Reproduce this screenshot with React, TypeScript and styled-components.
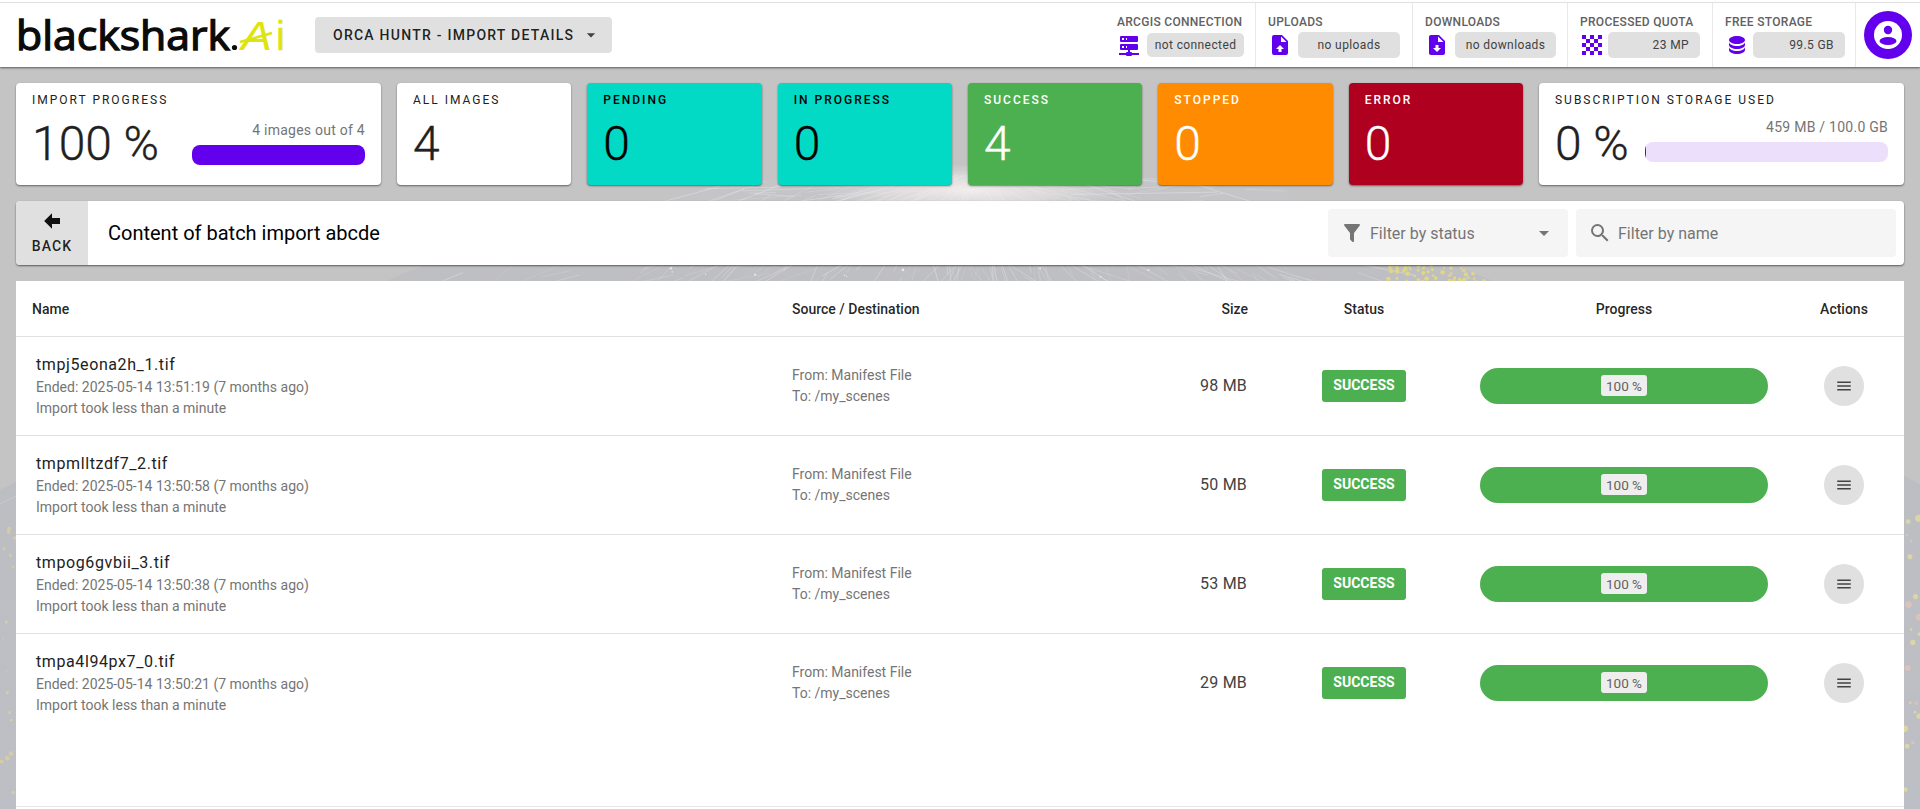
import React from "react";
import styled, { createGlobalStyle } from "styled-components";

const PURPLE = "#6200ee";
const GREEN = "#4caf50";

const Global = createGlobalStyle`
  html, body { margin: 0; padding: 0; height: 100%; overflow: hidden; }
  body { font-family: Roboto, "Liberation Sans", sans-serif; color: #212121; background: #c4c4c4; }
  * { box-sizing: border-box; }
`;

const Page = styled.div`
  position: relative;
  height: 100vh;
  display: flex;
  flex-direction: column;
  overflow: hidden;
  background: #c4c4c4;
`;
const Backdrop = styled.svg`
  position: absolute;
  inset: 0;
  width: 100%;
  height: 100%;
`;
const Header = styled.header`
  position: relative;
  order: 1;
  flex: none;
  height: 67px;
  padding-top: 2px;
  background: #fff;
  box-shadow: 0 1px 2px rgba(0, 0, 0, 0.55);
`;
const HeaderInner = styled.div`
  height: 65px;
  border-top: 1px solid #e0e0e0;
  display: flex;
  align-items: stretch;
`;
const LogoBox = styled.svg`
  flex: none;
  width: 270px;
  height: 48px;
  margin: 8px 0 0 16px;
  overflow: visible;
`;
const MenuButton = styled.div`
  flex: none;
  width: 297px;
  height: 36px;
  margin: 14px 0 0 29px;
  padding: 0 11px 0 18px;
  display: flex;
  align-items: center;
  justify-content: space-between;
  background: #e0e0e0;
  border-radius: 4px;
  font-size: 14px;
  font-weight: 500;
  letter-spacing: 1.25px;
  color: rgba(0, 0, 0, 0.87);
`;
const Stats = styled.div`
  margin-left: auto;
  display: flex;
`;
const Section = styled.div<{ $w: number; $first?: boolean }>`
  width: ${(p) => p.$w}px;
  padding: 12px 0 0 12px;
  border-left: ${(p) => (p.$first ? "none" : "1px solid #e8e8e8")};
`;
const SectionLabel = styled.div`
  font-size: 12px;
  line-height: 14px;
  font-weight: 500;
  letter-spacing: 0.3px;
  color: #616161;
  white-space: nowrap;
`;
const SectionRow = styled.div<{ $gap: number }>`
  display: flex;
  align-items: center;
  gap: ${(p) => p.$gap}px;
  height: 26px;
  margin-top: 3px;
`;
const Pill = styled.div<{ $w: number; $h: number; $right?: boolean }>`
  width: ${(p) => p.$w}px;
  height: ${(p) => p.$h}px;
  padding: 0 11px;
  display: flex;
  align-items: center;
  justify-content: ${(p) => (p.$right ? "flex-end" : "center")};
  background: #e0e0e0;
  border-radius: 5px;
  font-size: 12px;
  letter-spacing: 0.4px;
  color: #424242;
  white-space: nowrap;
`;
const AvatarCell = styled.div`
  width: 65px;
  border-left: 1px solid #e8e8e8;
  padding: 8px 0 0 8px;
`;
const Avatar = styled.div`
  width: 48px;
  height: 48px;
  border-radius: 50%;
  background: ${PURPLE};
  display: flex;
  align-items: center;
  justify-content: center;
`;
const Main = styled.main`
  position: relative;
  order: 2;
  flex: 1;
  min-height: 0;
  padding: 16px 16px 0;
  display: flex;
  flex-direction: column;
  gap: 16px;
`;
const CardGrid = styled.div`
  flex: none;
  display: grid;
  grid-template-columns: 365px repeat(6, 1fr) 365px;
  gap: 16px;
  height: 102px;
`;
const Card = styled.div<{ $bg?: string; $fg?: string }>`
  padding: 10px 16px 0;
  border-radius: 4px;
  background: ${(p) => p.$bg ?? "#fff"};
  color: ${(p) => p.$fg ?? "#212121"};
  box-shadow: 0 1px 2px rgba(0, 0, 0, 0.5);
`;
const CardLabel = styled.div<{ $strong?: boolean }>`
  font-size: 12px;
  line-height: 14px;
  letter-spacing: 2px;
  font-weight: ${(p) => (p.$strong ? 500 : 400)};
  white-space: nowrap;
`;
const BigValue = styled.div`
  font-size: 48px;
  line-height: 56px;
  font-weight: 300;
  -webkit-text-stroke: 0.35px currentColor;
  margin-top: 9px;
  white-space: nowrap;
`;
const ValueRow = styled.div`
  display: flex;
  justify-content: space-between;
  align-items: flex-start;
`;
const MeterColumn = styled.div<{ $w: number; $lift: number }>`
  width: ${(p) => p.$w}px;
  margin-top: ${(p) => 13 - p.$lift}px;
`;
const MeterCaption = styled.div`
  font-size: 14px;
  line-height: 20px;
  letter-spacing: 0.25px;
  color: #757575;
  text-align: right;
  white-space: nowrap;
`;
const MeterTrack = styled.div`
  height: 20px;
  margin-top: 5px;
  border-radius: 8px;
  overflow: hidden;
  background: #ecdffc;
`;
const MeterFill = styled.div`
  height: 100%;
  background: ${PURPLE};
`;
const Toolbar = styled.div`
  flex: none;
  height: 64px;
  display: flex;
  align-items: center;
  background: #fff;
  border-radius: 4px;
  overflow: hidden;
  box-shadow: 0 1px 2px rgba(0, 0, 0, 0.55);
`;
const BackButton = styled.div`
  width: 72px;
  height: 100%;
  padding-top: 8px;
  display: flex;
  flex-direction: column;
  align-items: center;
  background: #e0e0e0;
  font-size: 14px;
  line-height: 16px;
  font-weight: 500;
  letter-spacing: 1.1px;
  color: rgba(0, 0, 0, 0.87);
`;
const BackLabel = styled.span`
  margin-top: 5px;
`;
const ToolbarTitle = styled.div`
  margin-left: 20px;
  flex: 1;
  font-size: 20px;
  color: #000;
`;
const FilterField = styled.div<{ $w: number }>`
  width: ${(p) => p.$w}px;
  height: 48px;
  margin-right: 8px;
  padding: 0 12px;
  display: flex;
  align-items: center;
  gap: 6px;
  background: #f5f5f5;
  border-radius: 4px;
  font-size: 16px;
  color: #757575;
`;
const FilterText = styled.span`
  flex: 1;
`;
const TablePanel = styled.div`
  flex: 1;
  min-height: 0;
  display: flex;
  flex-direction: column;
  background: #fff;
`;
const RowGrid = styled.div`
  display: grid;
  grid-template-columns: 760px 324px 164px 200px 320px 120px;
  align-items: center;
`;
const HeadRow = styled(RowGrid)`
  flex: none;
  height: 56px;
  border-bottom: 1px solid #e0e0e0;
  font-size: 14px;
  font-weight: 500;
  color: rgba(0, 0, 0, 0.87);
`;
const Cell = styled.div<{ $align?: string; $pl?: number; $pr?: number }>`
  text-align: ${(p) => p.$align ?? "left"};
  padding-left: ${(p) => p.$pl ?? 0}px;
  padding-right: ${(p) => p.$pr ?? 0}px;
`;
const Row = styled(RowGrid)<{ $last?: boolean }>`
  height: 99px;
  padding-bottom: 1px;
  border-bottom: ${(p) => (p.$last ? "1px solid transparent" : "1px solid #e0e0e0")};
`;
const FileName = styled.div`
  font-size: 16px;
  line-height: 24px;
  letter-spacing: 0.6px;
  color: #212121;
`;
const SubLine = styled.div`
  font-size: 14px;
  line-height: 21px;
  color: #757575;
`;
const SizeText = styled.div`
  font-size: 16px;
  letter-spacing: 0.2px;
  color: #424242;
  text-align: right;
  padding-right: 17px;
`;
const CenterCell = styled.div`
  display: flex;
  justify-content: center;
`;
const Badge = styled.div`
  width: 84px;
  height: 32px;
  padding-bottom: 1px;
  display: flex;
  align-items: center;
  justify-content: center;
  background: ${GREEN};
  border-radius: 3px;
  color: #fff;
  font-size: 14px;
  font-weight: 700;
`;
const ProgressBar = styled.div`
  width: 288px;
  height: 36px;
  display: flex;
  align-items: center;
  justify-content: center;
  background: ${GREEN};
  border-radius: 18px;
`;
const ProgressChip = styled.div`
  width: 46px;
  height: 21px;
  display: flex;
  align-items: center;
  justify-content: center;
  background: #eeeeee;
  border-radius: 3px;
  font-size: 13.5px;
  color: #616161;
`;
const RoundButton = styled.div`
  width: 40px;
  height: 40px;
  border-radius: 50%;
  background: #e0e0e0;
  display: flex;
  align-items: center;
  justify-content: center;
`;
const TableSpacer = styled.div`
  flex: 1;
`;
const TableFoot = styled.div`
  flex: none;
  height: 3px;
  border-top: 1px solid #e8e8e8;
`;

const I = {
  server:
    "M13,19H14A1,1 0 0,1 15,20H22V22H15A1,1 0 0,1 14,23H10A1,1 0 0,1 9,22H2V20H9A1,1 0 0,1 10,19H11V17H4A1,1 0 0,1 3,16V12A1,1 0 0,1 4,11H20A1,1 0 0,1 21,12V16A1,1 0 0,1 20,17H13V19M4,3H20A1,1 0 0,1 21,4V8A1,1 0 0,1 20,9H4A1,1 0 0,1 3,8V4A1,1 0 0,1 4,3M9,7H10V5H9V7M9,15H10V13H9V15M5,5V7H7V5H5M5,13V15H7V13H5Z",
  upload:
    "M14,2H6A2,2 0 0,0 4,4V20A2,2 0 0,0 6,22H18A2,2 0 0,0 20,20V8L14,2M13.5,16V19H10.5V16H8L12.01,12L16,16H13.5M13,9V3.5L18.5,9H13Z",
  download:
    "M14,2H6C4.89,2 4,2.89 4,4V20C4,21.11 4.89,22 6,22H18C19.11,22 20,21.11 20,20V8L14,2M12,19L8,15H10.5V12H13.5V15H16L12,19M13,9V3.5L18.5,9H13Z",
  database:
    "M12,3C7.58,3 4,4.79 4,7C4,9.21 7.58,11 12,11C16.42,11 20,9.21 20,7C20,4.79 16.42,3 12,3M4,9V12C4,14.21 7.58,16 12,16C16.42,16 20,14.21 20,12V9C20,11.21 16.42,13 12,13C7.58,13 4,11.21 4,9M4,14V17C4,19.21 7.58,21 12,21C16.42,21 20,19.21 20,17V14C20,16.21 16.42,18 12,18C7.58,18 4,16.21 4,14Z",
  back: "M20,9V15H12V19.84L4.16,12L12,4.16V9H20Z",
  filter:
    "M14,12V19.88C14.04,20.18 13.94,20.5 13.71,20.71C13.32,21.1 12.69,21.1 12.3,20.71L10.29,18.7C10.06,18.47 9.96,18.16 10,17.87V12H9.97L4.21,4.62C3.87,4.19 3.95,3.56 4.38,3.22C4.57,3.08 4.78,3 5,3V3H19V3C19.22,3 19.43,3.08 19.62,3.22C20.05,3.56 20.13,4.19 19.79,4.62L14.03,12H14Z",
  search:
    "M9.5,3A6.5,6.5 0 0,1 16,9.5C16,11.11 15.41,12.59 14.44,13.73L14.71,14H15.5L20.5,19L19,20.5L14,15.5V14.71L13.73,14.44C12.59,15.41 11.11,16 9.5,16A6.5,6.5 0 0,1 3,9.5A6.5,6.5 0 0,1 9.5,3M9.5,5C7,5 5,7 5,9.5C5,12 7,14 9.5,14C12,14 14,12 14,9.5C14,7 12,5 9.5,5Z",
  menu: "M3,6H21V8H3V6M3,11H21V13H3V11M3,16H21V18H3V16Z",
  caret: "M7,10L12,15L17,10H7Z",
};

const Icon = ({ d, size = 24, color = PURPLE }: { d: string; size?: number; color?: string }) => (
  <svg width={size} height={size} viewBox="0 0 24 24" style={{ flex: "none" }}>
    <path d={d} fill={color} />
  </svg>
);

const Checker = () => {
  const cells: React.ReactNode[] = [];
  for (let y = 0; y < 5; y++)
    for (let x = 0; x < 5; x++)
      if ((x + y) % 2 === 1) cells.push(<rect key={`${x}-${y}`} x={2 + x * 4} y={2 + y * 4} width="4" height="4" fill="#fff" />);
  return (
    <svg width="24" height="24" viewBox="0 0 24 24" style={{ flex: "none" }}>
      <rect x="2" y="2" width="20" height="20" fill={PURPLE} />
      {cells}
    </svg>
  );
};

const Logo = () => (
  <LogoBox viewBox="0 0 270 48">
    <text x="0" y="39" fontFamily="'Open Sans', sans-serif" fontSize="40" fill="#0b0b0b" stroke="#0b0b0b" strokeWidth="1.3" textLength="214" lengthAdjust="spacingAndGlyphs">
      blackshark
    </text>
    <circle cx="218.5" cy="36.5" r="2.6" fill="#0b0b0b" />
    <text x="225" y="39" fontFamily="'Liberation Sans', sans-serif" fontStyle="italic" fontSize="40" fill="#dde40e" textLength="31" lengthAdjust="spacingAndGlyphs">
      A
    </text>
    <text x="260" y="39" fontFamily="'Liberation Sans', sans-serif" fontSize="40" fill="#dde40e" stroke="#dde40e" strokeWidth="0.4">
      i
    </text>
    <path d="M224 31L256 22" stroke="#dde40e" strokeWidth="2.6" fill="none" />
  </LogoBox>
);

function rng(seed: number) {
  let s = seed;
  return () => {
    s = (s * 16807) % 2147483647;
    return (s - 1) / 2147483646;
  };
}

const EARTH = "M722 185 C800 172 1150 172 1273 185 C1400 245 1560 300 1920 484 L1920 809 L0 809 L0 490 C170 400 300 320 404 273 C520 230 620 205 722 185Z";

const backdropLines = (() => {
  const r = rng(4711);
  const out: { x1: number; y1: number; x2: number; y2: number; o: number }[] = [];
  for (let i = 0; i < 800; i++) {
    const a = r() * Math.PI;
    const d0 = r() * r() * 640;
    const len = 20 + r() * 110;
    const skew = (r() - 0.5) * 1.4;
    const x1 = 975 + Math.cos(a) * d0 * 2;
    const y1 = 170 + Math.sin(a) * d0;
    out.push({
      x1,
      y1,
      x2: x1 + Math.cos(a + skew) * len * 1.2,
      y2: y1 + Math.sin(a + skew) * len * 0.7,
      o: 0.12 + r() * 0.35,
    });
  }
  return out;
})();

const backdropDots = (() => {
  const r = rng(912);
  const out: { x: number; y: number; s: number; c: string }[] = [];
  for (let i = 0; i < 70; i++) out.push({ x: 1385 + r() * 115, y: 265 + r() * 17, s: 0.8 + r() * 1.5, c: "#e0d68a" });
  for (let i = 0; i < 20; i++) out.push({ x: 1904 + r() * 16, y: 510 + r() * 290, s: 1.2 + r() * 2.4, c: r() > 0.5 ? "#dcd5a6" : "#d9c3ba" });
  for (let i = 0; i < 16; i++) out.push({ x: r() * 16, y: 520 + r() * 280, s: 0.8 + r() * 1.6, c: "#d4cca4" });
  for (let i = 0; i < 10; i++) out.push({ x: 620 + r() * 660, y: 266 + r() * 15, s: 0.6 + r() * 0.8, c: "#e8e8ea" });
  return out;
})();

const Background = () => (
  <Backdrop viewBox="0 0 1920 809" preserveAspectRatio="none">
    <defs>
      <radialGradient id="glow" cx="50%" cy="50%" r="50%">
        <stop offset="0%" stopColor="#f3eeee" />
        <stop offset="60%" stopColor="#e6e2e2" stopOpacity="0.6" />
        <stop offset="100%" stopColor="#e0e0e0" stopOpacity="0" />
      </radialGradient>
      <linearGradient id="earth" x1="0" y1="0" x2="0" y2="1">
        <stop offset="0%" stopColor="#c6c6c8" />
        <stop offset="20%" stopColor="#bcbdc1" />
        <stop offset="100%" stopColor="#bcbfc5" />
      </linearGradient>
      <clipPath id="earthClip">
        <path d={EARTH} />
      </clipPath>
    </defs>
    <rect width="1920" height="809" fill="#c4c4c4" />
    <path d={EARTH} fill="url(#earth)" />
    <g clipPath="url(#earthClip)">
      {backdropLines.map((l, i) => (
        <line key={i} x1={l.x1} y1={l.y1} x2={l.x2} y2={l.y2} stroke="#eef0f4" strokeOpacity={l.o} strokeWidth="0.8" />
      ))}
      {backdropDots.map((d, i) => (
        <circle key={i} cx={d.x} cy={d.y} r={d.s} fill={d.c} />
      ))}
    </g>
    <ellipse cx="970" cy="190" rx="150" ry="26" fill="url(#glow)" />
  </Backdrop>
);

type Simple = { label: string; value: string; bg: string; fg: string };
const simpleCards: Simple[] = [
  { label: "ALL IMAGES", value: "4", bg: "#fff", fg: "#212121" },
  { label: "PENDING", value: "0", bg: "#03dac6", fg: "#000" },
  { label: "IN PROGRESS", value: "0", bg: "#03dac6", fg: "#000" },
  { label: "SUCCESS", value: "4", bg: GREEN, fg: "#fff" },
  { label: "STOPPED", value: "0", bg: "#ff8c00", fg: "#fff" },
  { label: "ERROR", value: "0", bg: "#b00020", fg: "#fff" },
];

const files = [
  { name: "tmpj5eona2h_1.tif", ended: "2025-05-14 13:51:19", size: "98 MB" },
  { name: "tmpmlltzdf7_2.tif", ended: "2025-05-14 13:50:58", size: "50 MB" },
  { name: "tmpog6gvbii_3.tif", ended: "2025-05-14 13:50:38", size: "53 MB" },
  { name: "tmpa4l94px7_0.tif", ended: "2025-05-14 13:50:21", size: "29 MB" },
];

const ProgressCard = ({ label, value, caption, width, lift, fill }: { label: string; value: string; caption: string; width: number; lift: number; fill: number }) => (
  <Card>
    <CardLabel>{label}</CardLabel>
    <ValueRow>
      <BigValue>{value}</BigValue>
      <MeterColumn $w={width} $lift={lift}>
        <MeterCaption>{caption}</MeterCaption>
        <MeterTrack>
          <MeterFill style={{ width: `${fill}%` }} />
        </MeterTrack>
      </MeterColumn>
    </ValueRow>
  </Card>
);

export default function App() {
  return (
    <Page>
      <Global />
      <Background />
      <Main>
        <CardGrid>
          <ProgressCard label="IMPORT PROGRESS" value="100 %" caption="4 images out of 4" width={173} lift={0} fill={100} />
          {simpleCards.map((c) => (
            <Card key={c.label} $bg={c.bg} $fg={c.fg}>
              <CardLabel $strong={c.bg !== "#fff"}>{c.label}</CardLabel>
              <BigValue>{c.value}</BigValue>
            </Card>
          ))}
          <ProgressCard label="SUBSCRIPTION STORAGE USED" value="0 %" caption="459 MB / 100.0 GB" width={243} lift={3} fill={0.46} />
        </CardGrid>
        <Toolbar>
          <BackButton>
            <Icon d={I.back} color="#111" />
            <BackLabel>BACK</BackLabel>
          </BackButton>
          <ToolbarTitle>Content of batch import abcde</ToolbarTitle>
          <FilterField $w={240}>
            <Icon d={I.filter} color="#757575" />
            <FilterText>Filter by status</FilterText>
            <Icon d={I.caret} color="#757575" />
          </FilterField>
          <FilterField $w={320}>
            <Icon d={I.search} color="#757575" />
            <FilterText>Filter by name</FilterText>
          </FilterField>
        </Toolbar>
        <TablePanel>
          <HeadRow>
            <Cell $pl={16}>Name</Cell>
            <Cell $pl={16}>Source / Destination</Cell>
            <Cell $align="right" $pr={16}>Size</Cell>
            <Cell $align="center">Status</Cell>
            <Cell $align="center">Progress</Cell>
            <Cell $align="center">Actions</Cell>
          </HeadRow>
          {files.map((f, i) => (
            <Row key={f.name} $last={i === files.length - 1}>
              <Cell $pl={20}>
                <FileName>{f.name}</FileName>
                <SubLine>Ended: {f.ended} (7 months ago)</SubLine>
                <SubLine>Import took less than a minute</SubLine>
              </Cell>
              <Cell $pl={16}>
                <SubLine>From: Manifest File</SubLine>
                <SubLine>To: /my_scenes</SubLine>
              </Cell>
              <SizeText>{f.size}</SizeText>
              <CenterCell>
                <Badge>SUCCESS</Badge>
              </CenterCell>
              <CenterCell>
                <ProgressBar>
                  <ProgressChip>100 %</ProgressChip>
                </ProgressBar>
              </CenterCell>
              <CenterCell>
                <RoundButton>
                  <Icon d={I.menu} size={18} color="#424242" />
                </RoundButton>
              </CenterCell>
            </Row>
          ))}
          <TableSpacer />
          <TableFoot />
        </TablePanel>
      </Main>
      <Header>
        <HeaderInner>
          <Logo />
          <MenuButton>
            ORCA HUNTR - IMPORT DETAILS
            <Icon d={I.caret} size={20} color="#424242" />
          </MenuButton>
          <Stats>
            <Section $w={150} $first>
              <SectionLabel>ARCGIS CONNECTION</SectionLabel>
              <SectionRow $gap={6}>
                <Icon d={I.server} />
                <Pill $w={97} $h={24}>not connected</Pill>
              </SectionRow>
            </Section>
            <Section $w={157}>
              <SectionLabel>UPLOADS</SectionLabel>
              <SectionRow $gap={6}>
                <Icon d={I.upload} />
                <Pill $w={102} $h={26}>no uploads</Pill>
              </SectionRow>
            </Section>
            <Section $w={155}>
              <SectionLabel>DOWNLOADS</SectionLabel>
              <SectionRow $gap={6}>
                <Icon d={I.download} />
                <Pill $w={101} $h={26}>no downloads</Pill>
              </SectionRow>
            </Section>
            <Section $w={145}>
              <SectionLabel>PROCESSED QUOTA</SectionLabel>
              <SectionRow $gap={4}>
                <Checker />
                <Pill $w={92} $h={26} $right>23 MP</Pill>
              </SectionRow>
            </Section>
            <Section $w={143}>
              <SectionLabel>FREE STORAGE</SectionLabel>
              <SectionRow $gap={4}>
                <Icon d={I.database} />
                <Pill $w={92} $h={26} $right>99.5 GB</Pill>
              </SectionRow>
            </Section>
            <AvatarCell>
              <Avatar>
                <svg width="48" height="48" viewBox="0 0 48 48">
                  <circle cx="24" cy="24" r="14" fill="#fff" />
                  <circle cx="24" cy="19" r="4.2" fill={PURPLE} />
                  <ellipse cx="24" cy="30" rx="8.5" ry="4" fill={PURPLE} />
                </svg>
              </Avatar>
            </AvatarCell>
          </Stats>
        </HeaderInner>
      </Header>
    </Page>
  );
}
